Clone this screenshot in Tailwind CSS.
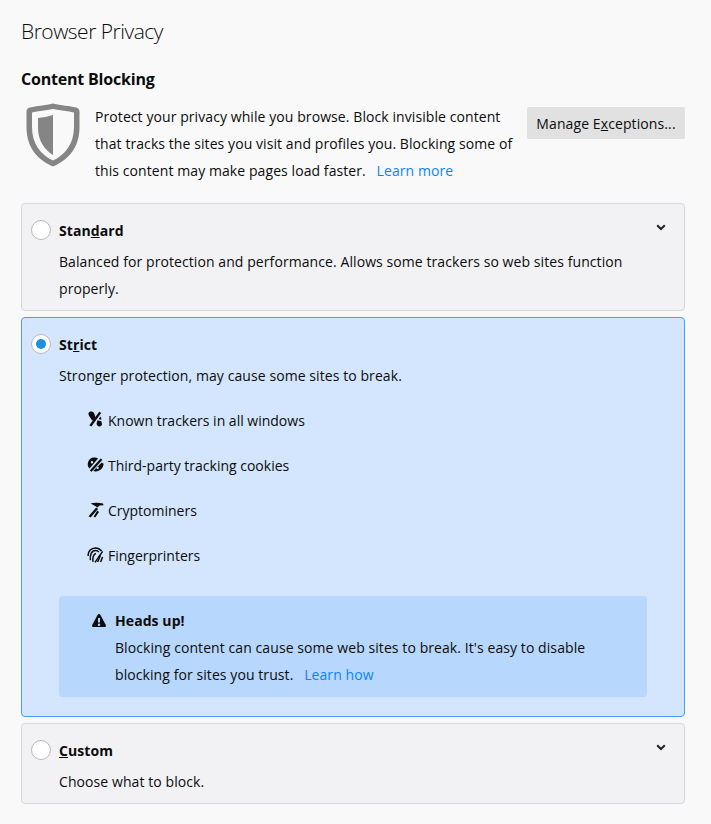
<!DOCTYPE html>
<html lang="en">
<head>
    <meta charset="UTF-8">
    <title>Browser Privacy</title>
    <script src="https://cdn.jsdelivr.net/npm/@tailwindcss/browser@4"></script>
</head>
<body class="bg-[#f9f9fa] text-[#0c0c0d] font-['Open_Sans',sans-serif] text-[14px] leading-[27px] tracking-[0.08px] w-[711px] h-[824px] overflow-hidden">
    <div class="pl-[21px] pr-[26px] pt-[15px]">
        <h1 class="text-[21px] font-light leading-[33px] tracking-[-0.5px]">Browser Privacy</h1>

        <h2 class="mt-[19px] text-[16px] font-bold leading-[24px] tracking-[-0.2px]">Content Blocking</h2>

        <!-- Intro -->
        <div class="flex mt-[11px] h-[101px]">
            <svg class="w-[54px] h-[64px] ml-[5px] mt-[1px] shrink-0" viewBox="0 0 54 64">
                <path fill="#858585" fill-rule="evenodd" d="M27 0.5C35 2.5 44 3 50 4.5C52.5 5 53.5 6.5 53.5 9V24C53.5 45 42 57 27 63.5C12 57 0.5 45 0.5 24V9C0.5 6.5 1.5 5 4 4.5C10 3 19 2.5 27 0.5ZM27 6C19.5 7.5 12 8.2 6 9.5V24C6 41 15 52 27 57.5C39 52 48 41 48 24V9.5C42 8.2 34.5 7.5 27 6Z"/>
                <path fill="#858585" d="M27 12V52C19 47 12 38 12 25V15C17 14.5 22 13.5 27 12Z"/>
            </svg>
            <p class="ml-[15px] w-[425px] shrink-0 mt-[1px] whitespace-nowrap">Protect your privacy while you browse. Block invisible content<br>that tracks the sites you visit and profiles you. Blocking some of<br>this content may make pages load faster. <a class="ml-[7px] text-[#0a84ff]">Learn more</a></p>
            <button class="ml-auto mt-[5px] w-[158px] h-[32px] bg-[#e1e1e2] rounded-[2px] leading-[34px] text-center tracking-[0.1px] whitespace-nowrap">Manage E<span class="underline">x</span>ceptions...</button>
        </div>

        <!-- Standard -->
        <div class="h-[108px] bg-[#f2f2f4] border border-[#d7d7db] rounded-[4px] pl-[37px] pr-[10px] pt-[13px] relative">
            <div class="absolute left-[9px] top-[16px] w-[20px] h-[20px] rounded-full bg-white border border-[#b8b8bb]"></div>
            <div class="flex justify-between h-[27px]">
                <span class="font-bold">Stan<span class="underline">d</span>ard</span>
                <svg class="w-[10px] h-[7px] mr-[8px] mt-[7px]" viewBox="0 0 10 7"><path d="M1.2 1.2L5 5L8.8 1.2" fill="none" stroke="#202023" stroke-width="2"/></svg>
            </div>
            <p class="mt-[4px]">Balanced for protection and performance. Allows some trackers so web sites function<br>properly.</p>
        </div>

        <!-- Strict -->
        <div class="mt-[6px] h-[400px] bg-[#d3e6fd] border border-[#4a9dfb] rounded-[4px] pl-[37px] pr-[37px] pt-[13px] relative">
            <div class="absolute left-[9px] top-[16px] w-[20px] h-[20px] rounded-full bg-white border border-[#b8b8bb] flex items-center justify-center">
                <div class="w-[10px] h-[10px] rounded-full bg-[#1e91dc]"></div>
            </div>
            <div class="font-bold h-[27px]">St<span class="underline">r</span>ict</div>
            <p class="mt-[4px]">Stronger protection, may cause some sites to break.</p>

            <ul class="mt-[18px] pl-[49px] flex flex-col gap-[18px] tracking-[0px]">
                <li class="flex items-center h-[27px] relative">
                    <!-- footprints with a slash -->
                    <svg class="absolute left-[-20px] top-[4px] w-[16px] h-[16px]" viewBox="0 0 16 16" fill="#0c0c0d">
                        <path d="M0.5 2C1 0.6 2.6 0.2 4 0.5C5.5 0.8 6.2 2 6.6 3.4L7.4 6.4L5.4 9.2L4 9.4C3.2 7 0 5 0.5 2Z"/>
                        <path d="M11.2 0.8L13.2 2L3.4 15.4L1.4 14.2Z"/>
                        <path d="M12.6 5.4C13 6.4 13.2 7.2 13.6 8.2L12 8.8L10.8 7.8Z"/>
                        <path d="M9.4 9.2L13.4 10.2L14 13C14 14.8 12.6 15.6 11 15.4C9.4 15.2 8.4 14 8.6 12.6Z"/>
                    </svg>
                    Known trackers in all windows
                </li>
                <li class="flex items-center h-[27px] relative">
                    <!-- cookie with a slash -->
                    <svg class="absolute left-[-21px] top-[5px] w-[17px] h-[16px]" viewBox="0 0 17 16" fill="#0c0c0d">
                        <path fill-rule="evenodd" d="M7 0.5C8.6 0.5 10 0.8 11 1.5L2.6 11.6C1.4 10.4 0.5 8.8 0.8 6.8C1.2 3.2 3.6 0.5 7 0.5ZM5 4A1.2 1.2 0 1 0 5 6.4A1.2 1.2 0 1 0 5 4Z"/>
                        <path d="M13.6 1.4L15.4 2.8L4.6 14.8L2.8 13.4Z"/>
                        <path fill-rule="evenodd" d="M14.8 5.6C15.2 6 16.2 6.6 16.6 6.8C16.4 11 13 14.4 8.6 14.4C7.8 14.4 7 14.3 6.2 14.1ZM10.6 9.6A1.2 1.2 0 1 0 10.6 12A1.2 1.2 0 1 0 10.6 9.6Z"/>
                    </svg>
                    Third-party tracking cookies
                </li>
                <li class="flex items-center h-[27px] relative">
                    <!-- pickaxe with a slash -->
                    <svg class="absolute left-[-20px] top-[5px] w-[16px] h-[16px]" viewBox="0 0 16 16" fill="#0c0c0d">
                        <path d="M2.5 1.6C6 0.4 11 0.8 15 1.4L15.6 3.2L11.5 3.4L9.6 5.6C7 3.6 4.6 2.6 2.5 1.6Z"/>
                        <path d="M8.2 5.6L10 7L2.6 15.6L0.6 14.2Z"/>
                        <path d="M9.4 8.6L11 10L7.2 15.6L5.6 14.6Z"/>
                    </svg>
                    Cryptominers
                </li>
                <li class="flex items-center h-[27px] relative">
                    <!-- fingerprint with a slash -->
                    <svg class="absolute left-[-21px] top-[5px] w-[17px] h-[16px]" viewBox="0 0 17 16" fill="none" stroke="#0c0c0d" stroke-width="1.5">
                        <path d="M1.2 9C0.6 4.4 4.2 0.9 8.4 0.9C11 0.9 13 2 14.6 4"/>
                        <path d="M3.4 13.2C2.6 8 4.6 3.6 8.6 3.6C10 3.6 11 4.2 11.8 5"/>
                        <path d="M6 14.8C5.4 11 6.4 6.6 9 6.4"/>
                        <path d="M15.6 4.4L8 15.4"/>
                        <path d="M13.4 8.4L10.6 15"/>
                        <path d="M15.6 10L13.6 15"/>
                    </svg>
                    Fingerprinters
                </li>
            </ul>

            <!-- Heads up -->
            <div class="mt-[27px] w-[588px] h-[101px] bg-[#b7d7fc] rounded-[4px] pl-[56px] pt-[11px] relative">
                <svg class="absolute left-[33px] top-[18px] w-[14px] h-[13px]" viewBox="0 0 14 13">
                    <path fill="#0c0c0d" fill-rule="evenodd" d="M7 0C7.5 0 8 .3 8.3 .8L13.8 11C14.3 12 13.6 13 12.6 13H1.4C.4 13 -.3 12 .2 11L5.7 .8C6 .3 6.5 0 7 0ZM6 4V8.5H8V4ZM7 9.5A1.2 1.2 0 1 0 7 11.9A1.2 1.2 0 1 0 7 9.5Z"/>
                </svg>
                <div class="font-bold">Heads up!</div>
                <p class="whitespace-nowrap">Blocking content can cause some web sites to break. It's easy to disable<br>blocking for sites you trust. <a class="ml-[7px] text-[#0a84ff]">Learn how</a></p>
            </div>
        </div>

        <!-- Custom -->
        <div class="mt-[6px] h-[81px] bg-[#f2f2f4] border border-[#d7d7db] rounded-[4px] pl-[37px] pr-[10px] pt-[13px] relative">
            <div class="absolute left-[9px] top-[16px] w-[20px] h-[20px] rounded-full bg-white border border-[#b8b8bb]"></div>
            <div class="flex justify-between h-[27px]">
                <span class="font-bold"><span class="underline">C</span>ustom</span>
                <svg class="w-[10px] h-[7px] mr-[8px] mt-[7px]" viewBox="0 0 10 7"><path d="M1.2 1.2L5 5L8.8 1.2" fill="none" stroke="#202023" stroke-width="2"/></svg>
            </div>
            <p class="mt-[4px]">Choose what to block.</p>
        </div>
    </div>
</body>
</html>
